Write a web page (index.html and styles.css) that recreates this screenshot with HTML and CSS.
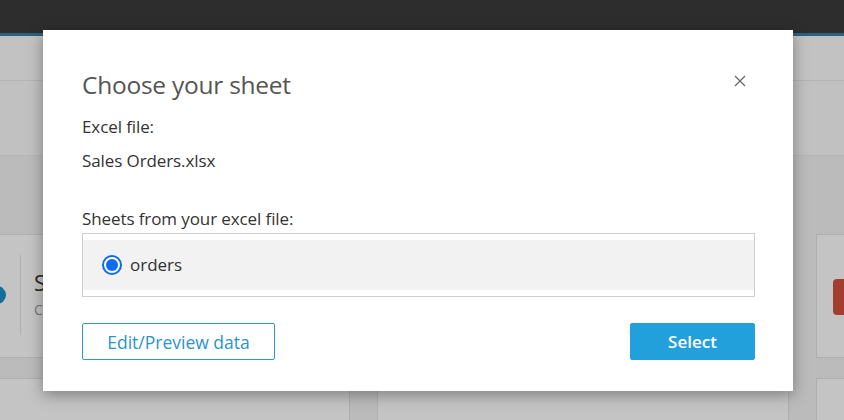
FILE: index.html
```html
<!DOCTYPE html>
<html>
<head>
<meta charset="utf-8">
<link rel="stylesheet" href="styles.css">
</head>
<body>
<div class="page">
  <div class="topbar"></div>
  <div class="accent"></div>
  <div class="band band-a"></div>
  <div class="band band-b"></div>
  <div class="content">
    <div class="cards">
      <div class="card">
        <div class="card-icon"></div>
        <div class="card-divider"></div>
        <div class="card-text">
          <div class="card-title">Sales</div>
          <div class="card-sub">Connect</div>
        </div>
      </div>
      <div class="card"></div>
      <div class="card">
        <div class="card-red"></div>
      </div>
      <div class="card"></div>
      <div class="card"></div>
      <div class="card"></div>
    </div>
  </div>
</div>
<div class="overlay"></div>
<div class="modal">
  <div class="modal-head">
    <h1 class="modal-title">Choose your sheet</h1>
    <button class="close" aria-label="Close">
      <svg width="12" height="12" viewBox="0 0 12 12"><path d="M1 1L11 11M11 1L1 11" stroke="#666" stroke-width="1.3" fill="none"/></svg>
    </button>
  </div>
  <div class="label">Excel file:</div>
  <div class="file">Sales Orders.xlsx</div>
  <div class="label sheets-label">Sheets from your excel file:</div>
  <div class="sheet-list">
    <label class="sheet-row">
      <span class="radio"><span class="radio-dot"></span></span>
      <span class="sheet-name">orders</span>
    </label>
  </div>
  <div class="actions">
    <button class="btn btn-outline">Edit/Preview data</button>
    <button class="btn btn-primary">Select</button>
  </div>
</div>
</body>
</html>
```
FILE: styles.css
```css
* { box-sizing: border-box; }
html, body { margin: 0; padding: 0; }
body {
  width: 844px;
  height: 420px;
  overflow: hidden;
  font-family: "Open Sans", "Noto Sans", sans-serif;
  background: #f4f4f4;
  position: relative;
}
.page { width: 844px; height: 420px; overflow: hidden; }
.topbar { height: 33px; background: #3b3b3b; }
.accent { height: 3px; background: #387ea8; }
.band { border-bottom: 1px solid #ebebeb; background: #fdfdfd; }
.band-a { height: 45px; }
.band-b { height: 75px; background: #fbfbfb; }
.content { padding-top: 78px; }
.cards {
  display: grid;
  grid-template-columns: 412px 412px 412px;
  column-gap: 27px;
  row-gap: 20px;
  margin-left: -62px;
}
.card {
  height: 124px;
  background: #ffffff;
  border: 1px solid #e4e4e4;
  position: relative;
  display: flex;
  align-items: center;
}
.card-icon {
  position: absolute;
  left: 49px;
  top: 51px;
  width: 18px;
  height: 18px;
  border-radius: 50%;
  background: #1d8fc9;
}
.card-divider {
  position: absolute;
  left: 81px;
  top: 20px;
  width: 1px;
  height: 80px;
  background: #e6e6e6;
}
.card-text { margin-left: 95px; margin-top: -6px; }
.card-title { font-size: 22px; color: #333; line-height: 28px; }
.card-sub { font-size: 14px; color: #999; margin-top: 4px; }
.card-red {
  position: absolute;
  left: 16px;
  top: 44px;
  width: 30px;
  height: 36px;
  background: #d4503c;
  border-radius: 4px 0 0 4px;
}
.overlay {
  position: absolute;
  left: 0; top: 0;
  width: 844px; height: 420px;
  background: rgba(0, 0, 0, 0.23);
}
.modal {
  position: absolute;
  left: 43px;
  top: 30px;
  width: 750px;
  height: 361px;
  background: #fff;
  box-shadow: 0 4px 14px rgba(0, 0, 0, 0.35);
  padding: 37px 38px 0 39px;
  color: #333;
}
.modal-head {
  display: flex;
  justify-content: space-between;
  align-items: center;
  height: 34px;
}
.modal-title {
  margin: 0;
  font-size: 24.5px;
  font-weight: 400;
  color: #555;
  letter-spacing: -0.25px;
}
.close {
  border: 0;
  background: none;
  padding: 0;
  margin-right: 9px;
  margin-top: -6px;
  width: 12px;
  height: 12px;
  display: flex;
}
.label { font-size: 17px; color: #333; line-height: 22px; margin-top: 15px; letter-spacing: -0.1px; }
.file { font-size: 17px; color: #333; line-height: 22px; margin-top: 12px; letter-spacing: -0.1px; }
.sheets-label { margin-top: 36px; }
.sheet-list {
  margin-top: 3px;
  border: 1px solid #cfcfcf;
  height: 64px;
  padding: 6px 0 6px 0;
  width: 673px;
}
.sheet-row {
  display: flex;
  align-items: center;
  height: 50px;
  background: #f2f2f2;
  padding-left: 19px;
}
.radio {
  width: 20px;
  height: 20px;
  border: 2px solid #0a6cf0;
  border-radius: 50%;
  display: flex;
  align-items: center;
  justify-content: center;
  background: #fff;
}
.radio-dot {
  width: 12px;
  height: 12px;
  border-radius: 50%;
  background: #0a6cf0;
}
.sheet-name { font-size: 17px; color: #333; margin-left: 8px; margin-top: -2px; }
.actions {
  display: flex;
  justify-content: space-between;
  margin-top: 26px;
  width: 673px;
}
.btn {
  height: 37px;
  font-family: "Open Sans", "Noto Sans", sans-serif;
  font-size: 17.5px;
  border-radius: 2px;
  cursor: pointer;
}
.btn-outline {
  width: 193px;
  background: #fff;
  border: 1px solid #2a9bd0;
  color: #2a95cb;
}
.btn-primary {
  width: 125px;
  background: #22a0db;
  border: 1px solid #22a0db;
  color: #fff;
  font-weight: 600;
  font-size: 17px;
}
```
